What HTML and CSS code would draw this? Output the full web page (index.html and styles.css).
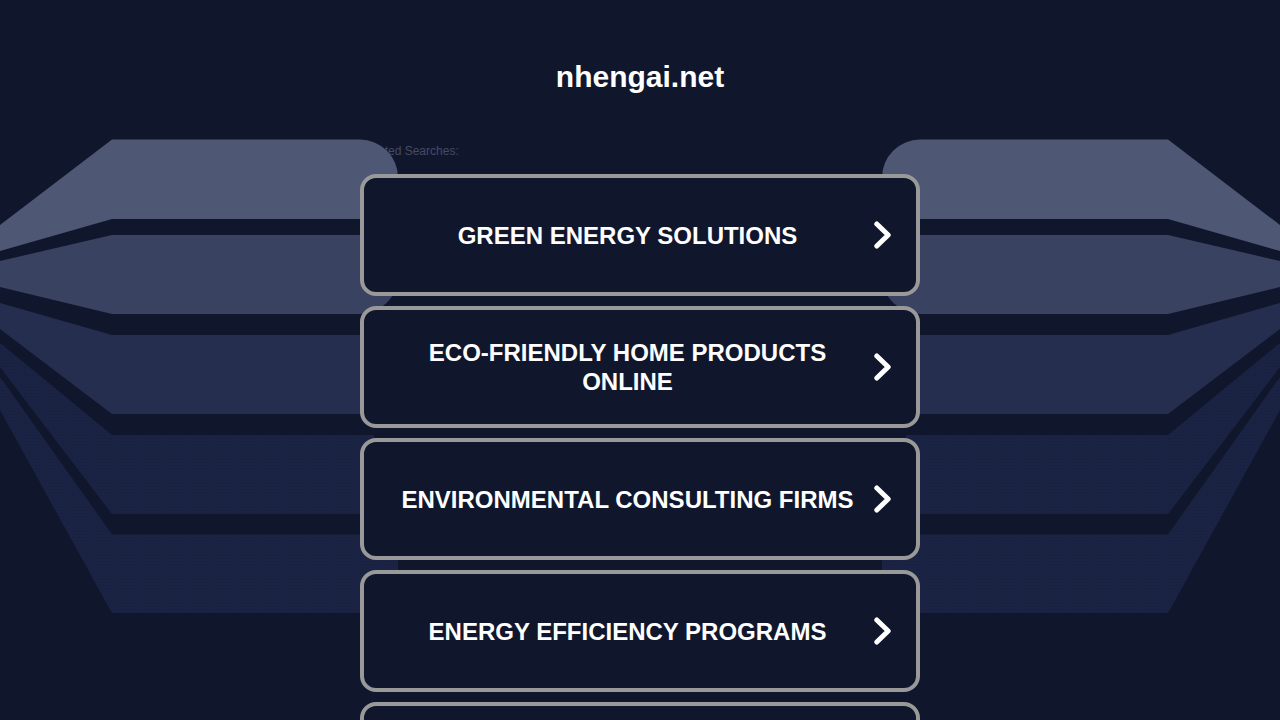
FILE: index.html
```html
<!DOCTYPE html>
<html lang="en">
  <head>
    <meta charset="UTF-8" />
    <meta name="viewport" content="width=device-width, initial-scale=1.0" />
    <title>nhengai.net</title>
    <link rel="stylesheet" href="styles.css">
  </head>
  <body>
    <!-- backdrop, mirrored around the middle of the page -->
    <svg class="backdrop" width="1280" height="720" viewBox="0 0 1280 720" aria-hidden="true">
      <defs>
        <pattern id="dots" width="3" height="3" patternUnits="userSpaceOnUse">
          <rect width="3" height="3" class="dots-base" />
          <rect width="1" height="1" class="dots-mark" />
        </pattern>
        <g id="wing">
          <path class="band-1" d="M0 225 L112 139.5 H360 A38 38 0 0 1 398 177.5 V219 H112 L0 251 Z" />
          <path class="band-2" d="M0 261 L112 235 H398 V276 A38 38 0 0 1 360 314 H112 L0 287 Z" />
          <path class="band-3" d="M0 303 L112 335 H362 V414 H112 L0 329 Z" />
          <path class="band-4" fill="url(#dots)" d="M0 343 L112 435 H374 V514 H112 L0 367 Z" />
          <path class="band-5" fill="url(#dots)" d="M0 377 L112 534.5 H398 V613 H112 L0 410 Z" />
        </g>
      </defs>
      <use href="#wing" />
      <use href="#wing" transform="matrix(-1 0 0 1 1280 0)" />
    </svg>

    <main class="page">
      <h1 class="domain">nhengai.net</h1>
      <p class="related">Related Searches:</p>

      <div class="links">
        <a class="link" href="#">
          <span class="link-text">GREEN ENERGY SOLUTIONS</span>
          <svg class="chevron" width="20" height="30" viewBox="0 0 20 30"><path d="M2.8 4 L14.2 15 L2.8 26" /></svg>
        </a>
        <a class="link" href="#">
          <span class="link-text">ECO-FRIENDLY HOME PRODUCTS ONLINE</span>
          <svg class="chevron" width="20" height="30" viewBox="0 0 20 30"><path d="M2.8 4 L14.2 15 L2.8 26" /></svg>
        </a>
        <a class="link" href="#">
          <span class="link-text">ENVIRONMENTAL CONSULTING FIRMS</span>
          <svg class="chevron" width="20" height="30" viewBox="0 0 20 30"><path d="M2.8 4 L14.2 15 L2.8 26" /></svg>
        </a>
        <a class="link" href="#">
          <span class="link-text">ENERGY EFFICIENCY PROGRAMS</span>
          <svg class="chevron" width="20" height="30" viewBox="0 0 20 30"><path d="M2.8 4 L14.2 15 L2.8 26" /></svg>
        </a>
        <a class="link" href="#"></a>
      </div>
    </main>
  </body>
</html>
```

FILE: styles.css
```css
html,
body {
  height: 720px;
  margin: 0;
  overflow: hidden;
}
body {
  background-color: #10172d;
  font-family: "Liberation Sans", Arial, sans-serif;
  color: #fff;
}

.backdrop {
  position: absolute;
  top: 0;
  left: 0;
  z-index: 1;
}
.band-1 {
  fill: #4e5774;
}
.band-2 {
  fill: #3a4261;
}
.band-3 {
  fill: #262e4f;
}
.dots-base {
  fill: #1a2343;
}
.dots-mark {
  fill: #171f3b;
}

.page {
  width: 560px;
  margin: 0 auto;
}
.domain {
  margin: 0;
  padding-top: 60px;
  font-size: 30px;
  line-height: 34px;
  font-weight: bold;
  text-align: center;
}
.related {
  margin: 0;
  padding-top: 50px;
  font-size: 12px;
  line-height: 14px;
  color: #454b63;
}

.links {
  display: flex;
  flex-direction: column;
  gap: 10px;
  margin-top: 16px;
}
.link {
  position: relative;
  z-index: 2;
  display: flex;
  align-items: center;
  box-sizing: border-box;
  height: 122px;
  padding: 0 22px 0 20px;
  background-color: #10172d;
  border: 4px solid #999;
  border-radius: 16px;
  color: #fff;
  text-decoration: none;
}
.link-text {
  flex: 1;
  padding-right: 3px;
  font-size: 24px;
  line-height: 29px;
  font-weight: bold;
  text-align: center;
}
.chevron {
  flex: none;
}
.chevron path {
  fill: none;
  stroke: #fff;
  stroke-width: 5;
  stroke-linecap: round;
  stroke-linejoin: round;
}
```
